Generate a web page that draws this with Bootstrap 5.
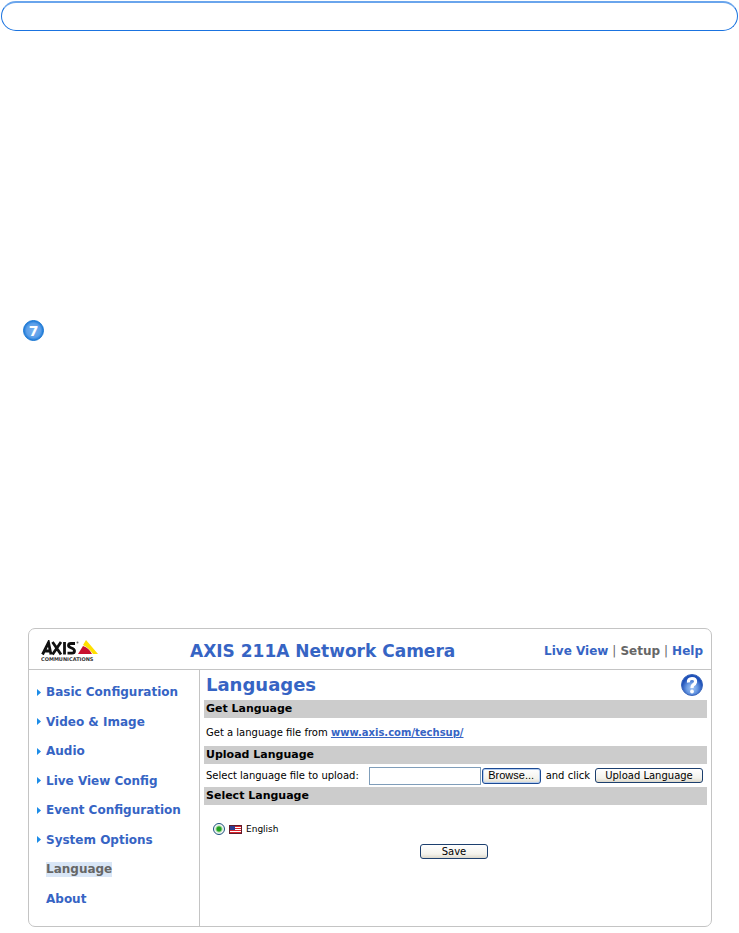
<!DOCTYPE html>
<html lang="en">
<head>
<meta charset="utf-8">
<meta name="viewport" content="width=device-width, initial-scale=1">
<title>AXIS 211A Network Camera - Languages</title>
<link href="https://cdn.jsdelivr.net/npm/bootstrap@5.3.0/dist/css/bootstrap.min.css" rel="stylesheet">
<style>
body { font-family: Verdana, "DejaVu Sans", sans-serif; font-size: 10px; line-height: 18px; color: #000; background: #fff; }
a { color: #3664c4; }
.page-tab { height: 30px; border: 1px solid #1a73e0; border-top: 2px solid #6aa5ec; border-radius: 15px; margin: 1px 1px 0; }
.step-row { padding: 289px 23px 0; }
.step-row svg { display: block; }
.camera-panel { margin: 287px 27px 0 28px; border: 1px solid #c4c4c4; border-radius: 7px; }
.panel-top { height: 41px; border-bottom: 1px solid #c4c4c4; padding: 4px 8px 0 12px; }
.brand-cell { width: 149px; }
.product-name { font-size: 17px; line-height: 24px; color: #3664c4; }
.top-links { font-size: 12px; color: #666; }
.side-menu { width: 171px; min-height: 256px; border-right: 1px solid #c4c4c4; padding: 15px 0 19px 7px; font-size: 12px; line-height: 18px; }
.side-menu a { line-height: 15px; }
.menu-mark { width: 10px; height: 8px; }
.side-menu .chosen { color: #666; background: #d9e6f6; }
.main-area { padding: 0 4px; min-width: 0; }
.title-row { height: 30px; padding: 0 4px 0 2px; }
.title-row h1 { font-size: 18px; line-height: 24px; color: #3664c4; }
.section-bar { font-size: 11px; line-height: 18px; background: #ccc; padding-left: 2px; }
.get-line { padding: 6px 2px 4px; }
.upload-line { padding: 0 4px 0 2px; height: 23px; }
.file-label { width: 163px; }
.file-box { width: 0; height: 18px; border: 1px solid #7f9db9; min-width: 0; margin-right: 1px; font-size: 10px; }
.xp-btn { border: 1px solid #1c3f6e; border-radius: 3px; background: linear-gradient(#fff, #f3f2ec 70%, #dcd8cb); font-size: 10px; line-height: 13px; height: 15px; color: #000; }
.browse-btn { font-family: "Liberation Sans", Arial, sans-serif; font-size: 11px; width: 59px; height: 16px; border-color: #1c4a94; box-shadow: inset 0 0 0 1px #b4cdf0; }
.click-text { padding: 0 5px; }
.upload-btn { width: 108px; }
.save-btn { width: 68px; }
.lang-line { padding: 15px 9px 0; font-size: 9px; }
.lang-radio { appearance: none; width: 12px; height: 12px; border: 1px solid #1c5180; border-radius: 50%; background: radial-gradient(circle, #21a121 0 2px, #9bd89b 3px, #f4f6f2 4px); }
.save-row { padding: 6px 3px 0 0; }
</style>
<script src="https://cdn.jsdelivr.net/npm/bootstrap@5.3.0/dist/js/bootstrap.bundle.min.js"></script>
</head>
<body>
<div class="page-tab"></div>
<div class="step-row">
  <svg width="21" height="21" viewBox="0 0 21 21" role="img" aria-label="Step 7">
    <defs><radialGradient id="stepFill"><stop offset="0" stop-color="#7ab2f0"/><stop offset=".7" stop-color="#5c9fe8"/><stop offset="1" stop-color="#1878d8"/></radialGradient></defs>
    <circle cx="10.500" cy="10.500" r="10" fill="url(#stepFill)" stroke="#1c78d2"/>
    <text x="10.500" y="16" text-anchor="middle" font-family="DejaVu Sans, sans-serif" font-weight="bold" font-size="14" fill="#fff">7</text>
  </svg>
</div>

<div class="camera-panel">
  <header class="panel-top d-flex align-items-center">
    <div class="brand-cell flex-shrink-0">
      <svg class="d-block" width="57" height="22" viewBox="0 0 57 22" role="img" aria-label="Axis Communications">
        <path d="M45 0L57 14H52Q48 8 42 5Z" fill="#ffe000"/>
        <path d="M37 14L42 6Q48 8 51 14Z" fill="#c8102e"/>
        <g stroke="#111" stroke-width="2.800" fill="none">
          <path d="M1.500 14.500L7.500 2.500L10 14.500M4 11H10M11.500 2L20 14.500M20 2L11.500 14.500M23.500 2V14.500M34 3.500H30Q27.500 3.500 27.500 5.500Q27.500 7 30.500 8Q33.500 9 33.500 11Q33.500 13.200 31 13.200H26.500"/>
        </g>
        <circle cx="36.500" cy="2.500" r="1" fill="#666"/>
        <text x="0" y="21" font-family="DejaVu Sans, sans-serif" font-size="5" font-weight="bold" fill="#333">COMMUNICATIONS</text>
      </svg>
    </div>
    <div class="product-name fw-bold flex-grow-1 text-nowrap">AXIS 211A Network Camera</div>
    <nav class="top-links d-flex gap-1 text-nowrap" aria-label="Views">
      <a class="fw-bold text-decoration-none" href="#">Live View</a><span>|</span><span class="fw-bold">Setup</span><span>|</span><a class="fw-bold text-decoration-none" href="#">Help</a>
    </nav>
  </header>
  <div class="d-flex">
    <nav class="side-menu d-flex flex-column justify-content-between flex-shrink-0 fw-bold text-nowrap" aria-label="Setup">
      <div class="d-flex align-items-center"><svg class="menu-mark" viewBox="0 0 10 8"><path d="M1 0V7L5 3.500Z" fill="#1c8ce8"/></svg><a class="text-decoration-none" href="#">Basic Configuration</a></div>
      <div class="d-flex align-items-center"><svg class="menu-mark" viewBox="0 0 10 8"><path d="M1 0V7L5 3.500Z" fill="#1c8ce8"/></svg><a class="text-decoration-none" href="#">Video &amp; Image</a></div>
      <div class="d-flex align-items-center"><svg class="menu-mark" viewBox="0 0 10 8"><path d="M1 0V7L5 3.500Z" fill="#1c8ce8"/></svg><a class="text-decoration-none" href="#">Audio</a></div>
      <div class="d-flex align-items-center"><svg class="menu-mark" viewBox="0 0 10 8"><path d="M1 0V7L5 3.500Z" fill="#1c8ce8"/></svg><a class="text-decoration-none" href="#">Live View Config</a></div>
      <div class="d-flex align-items-center"><svg class="menu-mark" viewBox="0 0 10 8"><path d="M1 0V7L5 3.500Z" fill="#1c8ce8"/></svg><a class="text-decoration-none" href="#">Event Configuration</a></div>
      <div class="d-flex align-items-center"><svg class="menu-mark" viewBox="0 0 10 8"><path d="M1 0V7L5 3.500Z" fill="#1c8ce8"/></svg><a class="text-decoration-none" href="#">System Options</a></div>
      <div class="d-flex align-items-center"><span class="menu-mark"></span><a class="chosen text-decoration-none" href="#">Language</a></div>
      <div class="d-flex align-items-center"><span class="menu-mark"></span><a class="text-decoration-none" href="#">About</a></div>
    </nav>
    <main class="main-area flex-fill">
      <div class="title-row d-flex align-items-center justify-content-between">
        <h1 class="fw-bold m-0">Languages</h1>
        <a class="d-block" href="#" aria-label="Help">
          <svg class="d-block" width="22" height="22" viewBox="0 0 22 22">
            <defs><radialGradient id="helpFill" cx=".5" cy=".65"><stop offset="0" stop-color="#a8c8f4"/><stop offset=".5" stop-color="#6c9ce4"/><stop offset="1" stop-color="#1e50b8"/></radialGradient></defs>
            <circle cx="11" cy="11" r="10.500" fill="url(#helpFill)" stroke="#3c68bc"/>
            <path d="M7.500 8.500Q7 4.500 11 4.500Q15 4.500 14.500 8Q14 10 12 11Q11 12 11 14" fill="none" stroke="#fff" stroke-width="3.200"/>
            <circle cx="11" cy="17.500" r="1.900" fill="#fff"/>
          </svg>
        </a>
      </div>
      <h2 class="section-bar fw-bold m-0">Get Language</h2>
      <div class="get-line">Get a language file from <a class="fw-bold" href="#">www.axis.com/techsup/</a></div>
      <h2 class="section-bar fw-bold m-0">Upload Language</h2>
      <form class="upload-line d-flex align-items-center text-nowrap">
        <label class="file-label flex-shrink-0" for="langFile">Select language file to upload:</label>
        <input class="file-box flex-fill p-0" id="langFile" type="text">
        <button class="xp-btn browse-btn flex-shrink-0 p-0" type="button">Browse...</button>
        <span class="click-text">and click</span>
        <button class="xp-btn upload-btn flex-shrink-0 p-0" type="button">Upload Language</button>
      </form>
      <h2 class="section-bar fw-bold m-0">Select Language</h2>
      <div class="lang-line d-flex align-items-center gap-1">
        <input class="lang-radio m-0" type="radio" name="lang" id="langEn" checked>
        <svg class="d-block" width="13" height="9" viewBox="0 0 13 9"><rect width="13" height="9" fill="#fff"/><path d="M0 1.500H13M0 3.500H13M0 5.500H13M0 7.500H13" stroke="#d8242c"/><rect width="6" height="5" fill="#2c3c90"/><rect x=".5" y=".5" width="12" height="8" fill="none" stroke="#601c2c"/></svg>
        <label for="langEn">English</label>
      </div>
      <div class="save-row d-flex justify-content-center"><button class="xp-btn save-btn p-0" type="button">Save</button></div>
    </main>
  </div>
</div>
</body>
</html>
